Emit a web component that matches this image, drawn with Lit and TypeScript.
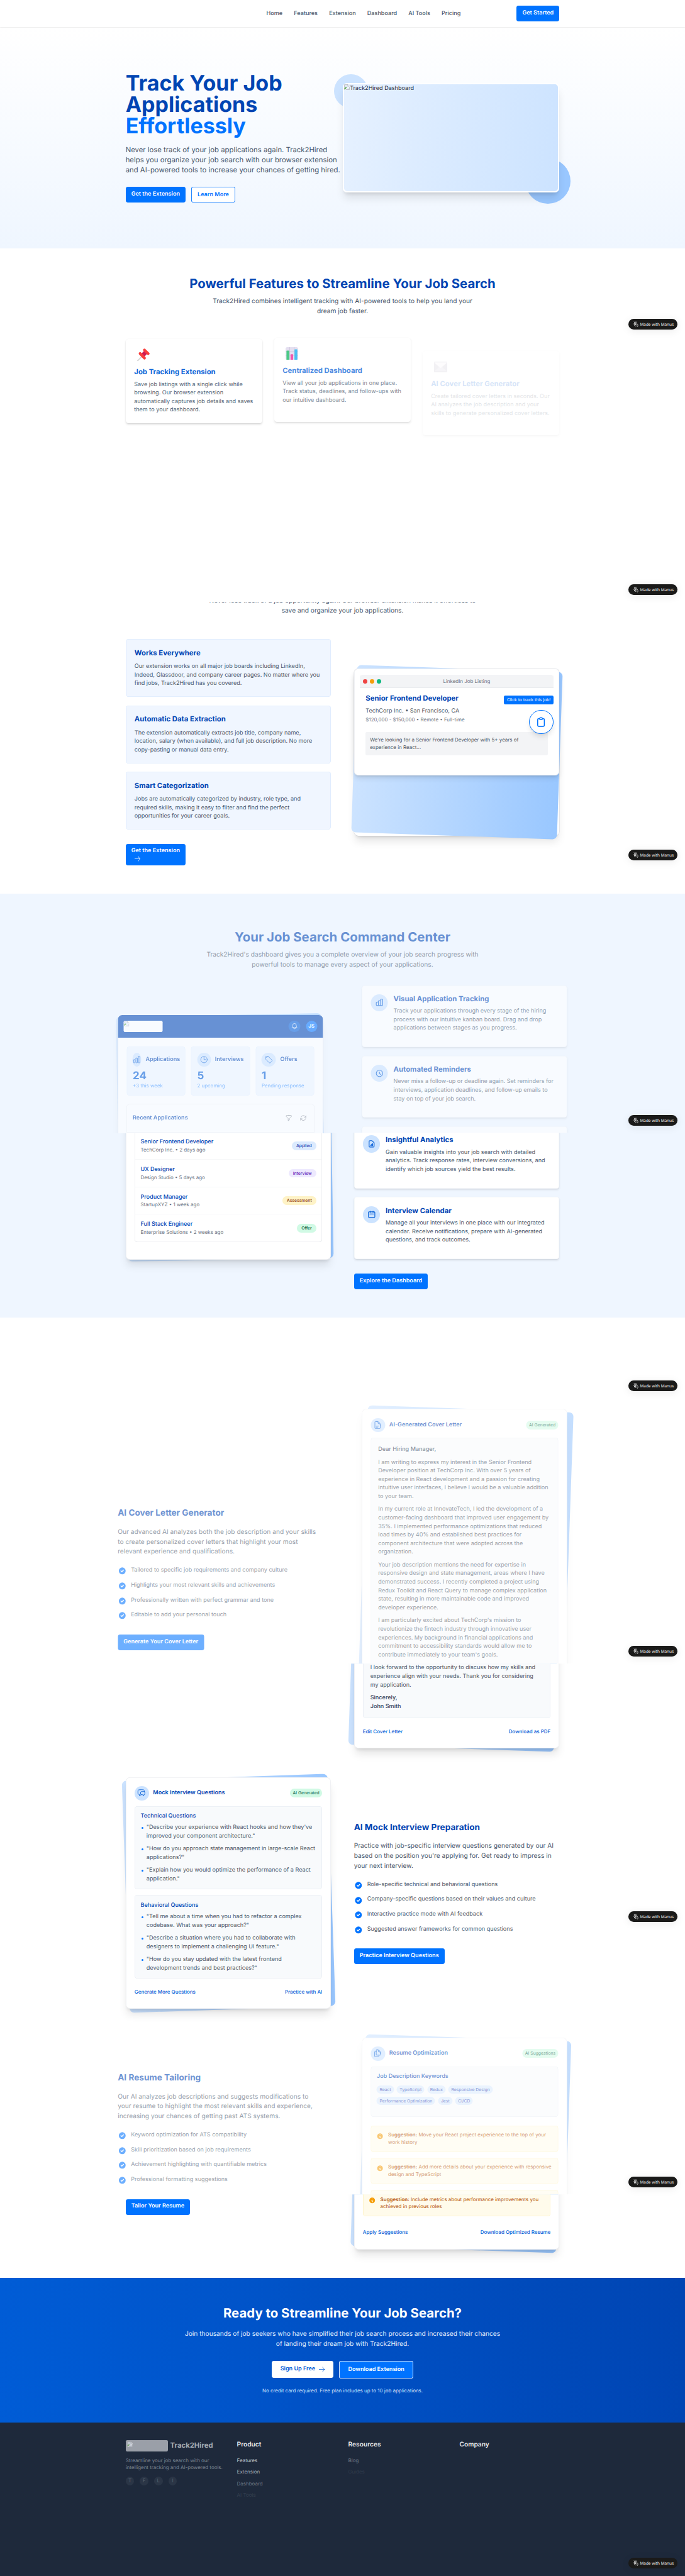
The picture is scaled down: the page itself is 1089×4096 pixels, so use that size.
import { LitElement, html, css } from "lit";
import { customElement } from "lit/decorators.js";
import { classMap } from "lit/directives/class-map.js";

const P = {
  bars: "M3 13.125C3 12.504 3.504 12 4.125 12h2.25c.621 0 1.125.504 1.125 1.125v6.75C7.5 20.496 6.996 21 6.375 21h-2.25A1.125 1.125 0 013 19.875v-6.75zM9.75 8.625c0-.621.504-1.125 1.125-1.125h2.25c.621 0 1.125.504 1.125 1.125v11.25c0 .621-.504 1.125-1.125 1.125h-2.25a1.125 1.125 0 01-1.125-1.125V8.625zM16.5 4.125c0-.621.504-1.125 1.125-1.125h2.25C20.496 3 21 3.504 21 4.125v15.75c0 .621-.504 1.125-1.125 1.125h-2.25a1.125 1.125 0 01-1.125-1.125V4.125z",
  barsJoined: "M9 19v-6a2 2 0 00-2-2H5a2 2 0 00-2 2v6a2 2 0 002 2h2a2 2 0 002-2zm0 0V9a2 2 0 012-2h2a2 2 0 012 2v10m-6 0a2 2 0 002 2h2a2 2 0 002-2m0 0V5a2 2 0 012-2h2a2 2 0 012 2v14a2 2 0 01-2 2h-2a2 2 0 01-2-2z",
  clock: "M12 6v6h4.5m4.5 0a9 9 0 11-18 0 9 9 0 0118 0z",
  clockBold: "M12 8v4l3 3m6-3a9 9 0 11-18 0 9 9 0 0118 0z",
  tag: "M9.568 3H5.25A2.25 2.25 0 003 5.25v4.318c0 .597.237 1.17.659 1.591l9.581 9.581c.699.699 1.78.872 2.607.33a18.095 18.095 0 005.223-5.223c.542-.827.369-1.908-.33-2.607L11.16 3.66A2.25 2.25 0 009.568 3zM6 6h.008v.008H6V6z",
  bell: "M14.857 17.082a23.848 23.848 0 005.454-1.31A8.967 8.967 0 0118 9.75v-.7V9A6 6 0 006 9v.75a8.967 8.967 0 01-2.312 6.022c1.733.64 3.56 1.085 5.455 1.31m5.714 0a24.255 24.255 0 01-5.714 0m5.714 0a3 3 0 11-5.714 0",
  funnel: "M12 3c2.755 0 5.455.232 8.083.678.533.09.917.556.917 1.096v1.044a2.25 2.25 0 01-.659 1.591l-5.432 5.432a2.25 2.25 0 00-.659 1.591v2.927a2.25 2.25 0 01-1.244 2.013L9.75 21v-6.568a2.25 2.25 0 00-.659-1.591L3.659 7.409A2.25 2.25 0 013 5.818V4.774c0-.54.384-1.006.917-1.096A48.32 48.32 0 0112 3z",
  refresh: "M16.023 9.348h4.992v-.001M2.985 19.644v-4.992m0 0h4.992m-4.993 0l3.181 3.183a8.25 8.25 0 0013.803-3.7M4.031 9.865a8.25 8.25 0 0113.803-3.7l3.181 3.182m0-4.991v4.99",
  report: "M9 17v-2m3 2v-4m3 4v-6m2 10H7a2 2 0 01-2-2V5a2 2 0 012-2h5.586a1 1 0 01.707.293l5.414 5.414a1 1 0 01.293.707V19a2 2 0 01-2 2z",
  calendar: "M8 7V3m8 4V3m-9 8h10M5 21h14a2 2 0 002-2V7a2 2 0 00-2-2H5a2 2 0 00-2 2v12a2 2 0 002 2z",
  doc: "M19.5 14.25v-2.625a3.375 3.375 0 00-3.375-3.375h-1.5A1.125 1.125 0 0113.5 7.125v-1.5a3.375 3.375 0 00-3.375-3.375H8.25m0 12.75h7.5m-7.5 3H12M10.5 2.25H5.625c-.621 0-1.125.504-1.125 1.125v17.25c0 .621.504 1.125 1.125 1.125h12.75c.621 0 1.125-.504 1.125-1.125V11.25a9 9 0 00-9-9z",
  chat: "M20.25 8.511c.884.284 1.5 1.128 1.5 2.097v4.286c0 1.136-.847 2.1-1.98 2.193-.34.027-.68.052-1.02.072v3.091l-3-3c-1.354 0-2.694-.055-4.02-.163a2.115 2.115 0 01-.825-.242m9.345-8.334a2.126 2.126 0 00-.476-.095 48.64 48.64 0 00-8.048 0c-1.131.094-1.976 1.057-1.976 2.192v4.286c0 .837.46 1.58 1.155 1.951m9.345-8.334V6.637c0-1.621-1.152-3.026-2.76-3.235A48.455 48.455 0 0011.25 3c-2.115 0-4.198.137-6.24.402-1.608.209-2.76 1.614-2.76 3.235v6.226c0 1.621 1.152 3.026 2.76 3.235.577.075 1.157.14 1.74.194V21l4.155-4.155",
  copy: "M15.75 17.25v3.375c0 .621-.504 1.125-1.125 1.125h-9.75a1.125 1.125 0 01-1.125-1.125V7.875c0-.621.504-1.125 1.125-1.125H6.75a9.06 9.06 0 011.5.124m7.5 10.376h3.375c.621 0 1.125-.504 1.125-1.125V11.25c0-4.46-3.243-8.161-7.5-8.876a9.06 9.06 0 00-1.5-.124H9.375c-.621 0-1.125.504-1.125 1.125v3.5m7.5 10.375H9.375a1.125 1.125 0 01-1.125-1.125v-9.25m12 6.625v-1.875a3.375 3.375 0 00-3.375-3.375h-1.5a1.125 1.125 0 01-1.125-1.125v-1.5a3.375 3.375 0 00-3.375-3.375H9.75",
  clipboard: "M9 5H7a2 2 0 00-2 2v12a2 2 0 002 2h10a2 2 0 002-2V7a2 2 0 00-2-2h-2M9 5a2 2 0 002 2h2a2 2 0 002-2M9 5a2 2 0 012-2h2a2 2 0 012 2",
  check: "M10 18a8 8 0 100-16 8 8 0 000 16zm3.707-9.293a1 1 0 00-1.414-1.414L9 10.586 7.707 9.293a1 1 0 00-1.414 1.414l2 2a1 1 0 001.414 0l4-4z",
  info: "M18 10a8 8 0 11-16 0 8 8 0 0116 0zm-7-4a1 1 0 11-2 0 1 1 0 012 0zM9 9a1 1 0 000 2v3a1 1 0 001 1h1a1 1 0 100-2v-3a1 1 0 00-1-1H9z",
};

const icon = (d: string, size = 24, w = 1.5) =>
  html`<svg class="ic" width=${size} height=${size} viewBox="0 0 24 24" fill="none" stroke="currentColor" stroke-width=${w} stroke-linecap="round" stroke-linejoin="round"><path d=${d}></path></svg>`;
const solid = (d: string, size: number) =>
  html`<svg class="ic" width=${size} height=${size} viewBox="0 0 20 20" fill="currentColor" fill-rule="evenodd"><path d=${d}></path></svg>`;
const arrow = html`<svg class="ic" width="17" height="16" viewBox="0 0 17 16" fill="none" stroke="currentColor" stroke-width="1.3"><path d="M0 8h16M10.5 1c1 3.5 3 6 6 7c-3 1-5 3.500-6 7"></path></svg>`;
const broken = html`<svg class="ic" width="16" height="16" viewBox="0 0 16 16"><path d="M1 1h9.500l4.500 4.500V15H1z" fill="#dfe8f6" stroke="#a5a5a5"></path><path d="M10.500 1v4.500H15" fill="#fff" stroke="#a5a5a5"></path><path d="M1.500 14.500V11L5 7.500l3 2.500-5 4.500z" fill="#58a846"></path><path d="M2 15.500L15.500 6" stroke="#fff" stroke-width="2"></path></svg>`;
const pin = html`<svg class="ic" width="35" height="36" viewBox="0 0 35 36"><path d="M1 35L14 22" stroke="#d3d3d3" stroke-width="3" stroke-linecap="round"></path><path d="M12 15L20 6l9 8-9 10z" fill="#ca0b4a"></path><path d="M8.500 14.500L20.500 27" stroke="#f8312f" stroke-width="8" stroke-linecap="round"></path><path d="M20.500 4.500L31 14.500" stroke="#f8312f" stroke-width="7.500" stroke-linecap="round"></path></svg>`;
const chart = html`<svg class="ic" width="35" height="36" viewBox="0 0 35 36"><rect width="35" height="36" rx="5" fill="#d9d2ea"></rect><path d="M0 12h35M0 24h35M11.500 0v36M24 0v36" stroke="#b9afd0" stroke-width="1.500"></path><path d="M2.500 10.500a1 1 0 011-1h6a1 1 0 011 1V36h-6a2 2 0 01-2-2z" fill="#00b453"></path><rect x="14" y="20" width="7" height="16" rx="1" fill="#ed0f8b"></rect><path d="M25 7a1 1 0 011-1h6a1 1 0 011 1v27a2 2 0 01-2 2h-6z" fill="#00a6ed"></path></svg>`;
const mail = html`<svg class="ic" width="37" height="30" viewBox="0 0 37 30"><rect width="37" height="30" rx="2" fill="#b4acbc"></rect><path d="M1 27L17 13h3l16 14z" fill="#cdc4d6"></path><path d="M1 3L16 16.500q2.500 2 5 0L36 3V2H1z" fill="#f3eef8"></path></svg>`;

const br = (a: string[]) => a.map((l, i) => (i ? html`<br />${l}` : l));

const SKILLS = [["React", "TypeScript", "Redux", "Responsive Design"], ["Performance Optimization", "Jest", "CI/CD"]];

@customElement("app-root")
export class AppRoot extends LitElement {
  static styles = css`
    :host { display: block; }
    * { box-sizing: border-box; }
    .page { zoom: 0.5671875; width: 1920px; height: 7221px; overflow: hidden; position: relative; background: #fff;
      font: 400 16px/24px Inter, "Liberation Sans", sans-serif; color: #475569; white-space: nowrap; text-rendering: geometricPrecision; }
    h1, h2, h3, h4, p, ul { margin: 0; padding: 0; list-style: none; }
    .ic { display: block; flex: none; }
    .wrap { width: 1216px; margin: 0 auto; }
    h2 { font-size: 36px; line-height: 40px; font-weight: 700; color: #0045b3; text-align: center; }
    h3 { font-size: 20px; line-height: 28px; font-weight: 700; color: #0045b3; }
    .sub { font-size: 18px; line-height: 28px; text-align: center; margin-top: 16px; }
    .btn { display: inline-flex; align-items: center; height: 44px; padding: 0 16px 3px; border-radius: 6px; background: #0073ff; color: #fff; font-weight: 600; }
    .btn.line { background: #fff; color: #0073ff; box-shadow: inset 0 0 0 1.5px #0073ff; padding: 0 17.5px 1px; }

    header { height: 76px; background: #fff; box-shadow: 0 1px 2px rgba(0,0,0,.08); position: relative; z-index: 2; }
    .bar { display: flex; justify-content: flex-end; align-items: center; height: 76px; gap: 157px; }
    nav { display: flex; gap: 32px; font-weight: 500; }

    .hero { height: 620px; background: linear-gradient(#fff, #eff6ff); padding-top: 128px; }
    .hero .wrap { display: flex; justify-content: space-between; }
    .copy { width: 608px; }
    h1 { font-size: 60px; line-height: 60px; font-weight: 700; color: #0045b3; }
    h1 span { color: #0073ff; }
    .copy p { font-size: 20px; line-height: 28px; margin: 24px 0 32px; }
    .row { display: flex; gap: 16px; align-items: flex-start; }
    .shot { position: relative; width: 608px; height: 308px; margin-top: 28px; }
    .blob { position: absolute; border-radius: 50%; }
    .blob.a { width: 96px; height: 96px; left: -24px; top: -24px; background: #cce3ff; }
    .blob.b { width: 128px; height: 128px; right: -32px; bottom: -32px; background: #99c7ff; }
    .frame { position: relative; display: flex; height: 308px; border-radius: 12px; border: 4px solid #fff; background: linear-gradient(100deg, #e6f1ff, #cce3ff);
      box-shadow: 0 20px 25px -5px rgba(0,0,0,.1), 0 8px 10px -6px rgba(0,0,0,.1); color: #1e293b; }
    .frame span { margin-left: 1px; }

    .features { height: 992px; padding-top: 80px; }
    .three { display: grid; grid-template-columns: repeat(3, 384px); gap: 32px; margin-top: 62px; }
    .fc { height: 236px; padding: 24px; border-radius: 8px; background: #fff; box-shadow: 0 4px 6px -1px rgba(0,0,0,.1), 0 2px 4px -2px rgba(0,0,0,.1), 0 0 0 1px rgba(0,0,0,.02); }
    .fc h3 { color: #005cd6; margin: 16px 0 8px; }
    .em { height: 40px; display: flex; align-items: center; padding-left: 8px; }
    .f1 { opacity: .93; }
    .f2 { opacity: .7; margin-top: -3px; margin-bottom: 3px; }
    .f3 { opacity: .16; margin-top: 34px; }

    .ext { height: 818px; }
    .cut { height: 40px; overflow: hidden; display: flex; flex-direction: column; justify-content: flex-end; }
    .cut .sub { margin: 0; }
    .two { display: flex; justify-content: space-between; }
    .exts { margin-top: 64px; }
    .col { width: 576px; }
    .stack { display: flex; flex-direction: column; gap: 24px; }
    .ec { height: 162px; padding: 25px; border-radius: 8px; background: #f0f6ff; box-shadow: inset 0 0 0 1px #d3e5fd; }
    .ec p { margin-top: 12px; }
    .wide { flex-direction: column; align-items: flex-start; width: 168px; height: 60px; padding: 8px 16px; margin-top: 40px; }
    .wide .ic { margin: 2px 0 0 9px; }
    .ghost { position: relative; height: 469px; margin-top: 83px; border-radius: 12px; background: #fff; box-shadow: 0 20px 25px -5px rgba(0,0,0,.1), 0 8px 10px -6px rgba(0,0,0,.1), 0 0 0 1px #e5e7eb; }
    .tilt { position: absolute; left: 0; top: 0; width: 576px; border-radius: 12px; background: linear-gradient(90deg, #cce3ff, #99c7ff); }
    .full { height: 469px; }
    .t2 { transform: rotate(2deg); }
    .tn1 { transform: rotate(-1deg); }
    .tn2 { transform: rotate(-2deg); }
    .demo { position: relative; height: 299px; padding: 17px; border-radius: 12px; background: #fff; box-shadow: 0 10px 15px -3px rgba(0,0,0,.12), 0 4px 6px -4px rgba(0,0,0,.1), inset 0 0 0 1px #e5e7eb; }
    .tb { height: 37px; background: #f3f4f6; border-radius: 8px 8px 0 0; box-shadow: inset 0 -1px #dfe2e6; display: flex; align-items: center; padding: 0 8px; gap: 8px; }
    .dot { width: 12px; height: 12px; border-radius: 50%; }
    .red { background: #ef4444; }
    .amb { background: #f59e0b; }
    .grn { background: #10b981; }
    .tb span { flex: 1; text-align: center; font-size: 14px; color: #6b7280; padding-right: 4px; }
    .job { padding: 16px; position: relative; }
    .job .l2 { margin-top: 8px; color: #4b5563; }
    .job .l3 { font-size: 14px; line-height: 20px; color: #6b7280; margin-top: 4px; }
    .job .l4 { font-size: 14px; line-height: 20px; background: #f3f4f6; border-radius: 4px; padding: 12px; margin-top: 24px; color: #4b5563; }
    .tip { position: absolute; right: 0; top: 21px; height: 24px; padding: 0 8px; background: #0073ff; color: #fff; font-size: 12px; line-height: 24px; border-radius: 4px; }
    .fab { position: absolute; right: 0; top: 61px; width: 68px; height: 68px; border-radius: 50%; border: 2px solid #0073ff; background: #fff; color: #0073ff; display: flex; align-items: center; justify-content: center; box-shadow: 0 10px 15px -3px rgba(0,0,0,.12), 0 4px 6px -4px rgba(0,0,0,.1); }

    .dash { height: 1188px; background: #eff6ff; padding-top: 102px; }
    .fade { opacity: .57; }
    .dash .two { margin-top: 42px; align-items: center; height: 852px; }
    .up { position: relative; clip-path: inset(-60px -60px 0 -60px); }
    .dn { position: relative; display: flow-root; clip-path: inset(0 -60px -60px -60px); }
    .dn.stack { display: flex; }
    .l { transform: translateX(-22px); }
    .r { transform: translateX(22px); }
    .card { position: relative; border-radius: 12px; background: #fff; box-shadow: 0 20px 25px -5px rgba(0,0,0,.1), 0 8px 10px -6px rgba(0,0,0,.1), inset 0 0 0 1px #e5e7eb; }
    .mock-up { height: 331px; }
    .mock-up .card { height: 400px; overflow: hidden; }
    .mock-up .tilt, .mock-dn .tilt { height: 686px; }
    .mock-dn { height: 355px; }
    .mock-dn .tilt { top: -331px; }
    .mock-dn .card { height: 415px; margin-top: -60px; padding: 60px 25px 0; }
    .top { height: 64px; background: #0045b3; display: flex; align-items: center; padding: 0 17px; }
    .logo { width: 109px; height: 32px; border-radius: 4px; background: #fff; margin-right: auto; }
    .rnd { width: 32px; height: 32px; border-radius: 50%; display: flex; align-items: center; justify-content: center; color: #fff; font-size: 14px; font-weight: 600; }
    .rnd.n { background: #005cd6; margin-right: 16px; }
    .rnd.j { background: #0073ff; }
    .stats { display: grid; grid-template-columns: 1fr 1fr 1fr; gap: 16px; padding: 25px 25px 24px; }
    .stat { height: 138px; min-width: 0; padding: 17px; border-radius: 8px; background: #f0f6ff; box-shadow: inset 0 0 0 1px #dcebff; }
    .sh { display: flex; align-items: center; gap: 12px; height: 40px; font-weight: 600; color: #0045b3; }
    .oval { width: 40px; height: 40px; border-radius: 50%; background: #cce3ff; color: #005cd6; display: flex; align-items: center; justify-content: center; flex: 0 1 auto; min-width: 24px; }
    .num { font-size: 30px; line-height: 36px; font-weight: 700; color: #005cd6; margin-top: 8px; }
    .nt { font-size: 14px; line-height: 20px; color: #3d94ff; }
    .rec { margin: 0 25px; height: 77px; border-radius: 8px 8px 0 0; box-shadow: 0 0 0 1px #e5e7eb; display: flex; align-items: center; padding: 0 21px 0 17px; font-weight: 600; color: #0045b3; }
    .rec .ic { color: #6b7280; }
    .rec .ic:nth-of-type(1) { margin-left: auto; margin-right: 20px; }
    .rows { box-shadow: inset 1px 0 #e5e7eb, inset -1px 0 #e5e7eb, inset 0 -1px #e5e7eb; border-radius: 0 0 8px 8px; height: 306px; }
    .app { display: flex; justify-content: space-between; align-items: center; height: 77px; padding: 0 17px 1px; box-shadow: inset 0 -1px #eef0f3; }
    .app:first-child { height: 75px; padding-bottom: 3px; }
    .app:last-child { box-shadow: none; }
    .app b { display: block; font-weight: 500; color: #0045b3; }
    .app i { display: block; font-style: normal; font-size: 14px; line-height: 20px; color: #6b7280; }
    .pill { height: 24px; line-height: 24px; border-radius: 12px; padding: 0 12px; font-size: 12px; font-weight: 500; }
    .applied { background: #dbeafe; color: #1e40af; }
    .interview { background: #ede9fe; color: #5b21b6; }
    .assessment { background: #fef3c7; color: #92400e; }
    .offer { background: #d1fae5; color: #065f46; }
    .fu { height: 414px; }
    .fl { height: 354px; }
    .item { flex: none; height: 174px; padding: 25px; display: flex; gap: 16px; border-radius: 8px; background: #fff; box-shadow: 0 4px 6px -1px rgba(0,0,0,.1), 0 2px 4px -2px rgba(0,0,0,.1), inset 0 0 0 1px #eef2f7; }
    .item p { margin-top: 8px; }
    .disc { width: 48px; height: 48px; border-radius: 50%; background: #cce3ff; color: #005cd6; display: flex; align-items: center; justify-content: center; flex: none; }
    .peek { margin-bottom: -156px; }
    .fl .item:first-child { height: 216px; margin-top: -60px; padding-top: 67px; }
    .gap { margin-top: 40px; }

    .ai { height: 2692px; padding-top: 256px; display: flex; flex-direction: column; gap: 80px; }
    .ai .two { align-items: center; flex: none; }
    .ai .two:nth-child(1) { height: 952px; }
    .ai .two:nth-child(2) { height: 650px; }
    .ai .two:nth-child(3) { height: 594px; }
    .blk { height: 400px; }
    .blk h3, .res h3 { font-size: 24px; line-height: 32px; }
    .lead { font-size: 18px; line-height: 28px; margin: 24px 0; }
    .chk { height: 42px; display: flex; gap: 13px; }
    .chk .ic { color: #0073ff; margin-top: 2px; }
    .chks { height: 192px; }
    .lu { height: 714px; }
    .ld { height: 238px; }
    .lu .tilt, .ld .tilt { height: 952px; }
    .ld .tilt { top: -714px; }
    .lu .card { height: 780px; }
    .pad { padding: 25px; }
    .ch { display: flex; align-items: center; height: 40px; margin-bottom: 16px; font-weight: 600; color: #0045b3; gap: 12px; }
    .gen { margin-left: auto; font-size: 12px; font-weight: 400; height: 24px; line-height: 24px; padding: 0 8px; border-radius: 12px; background: #d1fae5; color: #065f46; }
    .box { background: #f8fafc; border-radius: 8px; box-shadow: inset 0 0 0 1px #e2e8f0; }
    .letter { padding: 21px; color: #4b5563; }
    .letter p { margin-bottom: 12px; }
    .letter .dk { color: #374151; font-weight: 500; }
    .lu .letter { height: 760px; }
    .ld .card { height: 298px; margin-top: -60px; padding: 0 25px; }
    .ld .letter { height: 213px; padding-top: 60px; }
    .lnk { display: flex; justify-content: space-between; font-size: 14px; line-height: 44px; font-weight: 500; color: #005cd6; margin-top: 16px; }
    .mi { position: relative; }
    .mi-t { height: 650px; }
    .mi-c { height: 650px; }
    .q { padding: 17px; height: 234px; margin-bottom: 16px; color: #4b5563; }
    .q b, .kw b { display: block; font-weight: 500; color: #0045b3; margin-bottom: 8px; }
    .q li { display: flex; gap: 9px; margin-bottom: 12px; }
    .q li::before { content: ""; width: 5.5px; height: 5.5px; border-radius: 50%; background: #0073ff; margin: 10px 0 0 2px; }
    .ru { height: 440px; }
    .rd { height: 154px; }
    .ru .tilt, .rd .tilt { height: 594px; }
    .rd .tilt { top: -440px; }
    .ru .card { height: 520px; }
    .rd .card { height: 214px; margin-top: -60px; padding: 0 25px; }
    .kw { padding: 17px; height: 142px; margin-bottom: 24px; }
    .kw b { margin-bottom: 12px; }
    .tags { display: flex; gap: 8px; margin-bottom: 8px; }
    .tags span { height: 24px; line-height: 24px; border-radius: 12px; padding: 0 8px; font-size: 12px; background: #dbeafe; color: #1e40af; }
    .sg { height: 74px; padding: 17px 17px 0; margin-bottom: 16px; display: flex; gap: 12px; border-radius: 8px; background: #fffbeb; box-shadow: inset 0 0 0 1px #fef0b8; font-size: 14px; line-height: 20px; color: #b45309; }
    .sg .ic { color: #f59e0b; margin-top: 2px; }
    .sg b { font-weight: 600; }
    .rd .sg { height: 121px; padding-top: 64px; margin-bottom: 24px; }
    .rd .rl { margin-top: 0; }
    .res { height: 343px; }
    .tail { height: 57px; padding-top: 13px; }

    .cta { height: 406px; padding-top: 80px; background: linear-gradient(90deg, #005cd6, #0045b3); }
    .cta h2 { color: #fff; }
    .cta .sub { color: #e6f1ff; margin-top: 24px; }
    .cta .row { justify-content: center; margin-top: 32px; }
    .big { height: 48px; padding: 0 24px; gap: 10px; }
    .cta .w { background: #fff; color: #005cd6; }
    .cta .o { height: 50px; box-shadow: inset 0 0 0 1.5px #fff; padding: 0 25px; }
    .fine { font-size: 14px; line-height: 20px; color: #cce3ff; text-align: center; margin-top: 24px; }

    footer { height: 429px; background: #1e293b; padding-top: 48px; }
    footer .wrap { display: grid; grid-template-columns: repeat(4, 280px); gap: 32px; font-size: 14px; line-height: 20px; }
    .brand { display: flex; align-items: center; gap: 7px; font-size: 20px; font-weight: 700; color: #a5a9b1; }
    .fl-logo { width: 118px; height: 32px; padding: 4px; background: #9a9fa8; border-radius: 4px; }
    .fl-logo .ic { opacity: .55; }
    .blurb { margin-top: 16px; color: #7a8492; }
    .soc { display: flex; gap: 16px; margin-top: 16px; }
    .soc span { width: 24px; height: 24px; border-radius: 50%; background: #2a3546; color: #5b6573; text-align: center; line-height: 24px; }
    h4 { margin: 0 0 20px; font-size: 18px; line-height: 28px; font-weight: 600; color: #ebecee; }
    .fk { line-height: 32px; margin-top: -6px; }
    .c1 { color: #bdc2c9; }
    .c2 { color: #a0a7b1; }
    .c3 { color: #6b7583; }
    .c4 { color: #354050; }
    .c5 { color: #6f7987; }
    .c6 { color: #303b4c; }

    .made { position: absolute; right: 21px; width: 137px; height: 30px; border-radius: 15px; background: #1a1a19; color: #fff; font: 500 11.4px/30px "Open Sans", "Noto Sans", sans-serif; display: flex; align-items: center; gap: 5px; padding-left: 13px; z-index: 5; box-shadow: 0 4px 24px rgba(0,0,0,.08); }
    .m0 { top: 894px; }
    .m1 { top: 1638px; }
    .m2 { top: 2382px; }
    .m3 { top: 3126px; }
    .m4 { top: 3870px; }
    .m5 { top: 4614px; }
    .m6 { top: 5358px; }
    .m7 { top: 6102px; }
    .m8 { top: 7170px; }
  `;

  private made(i: number) {
    return html`<div class=${classMap({ made: true, ["m" + i]: true })}>
      <svg class="ic" width="14" height="16" viewBox="0 0 14 16" fill="none" stroke="#fff" stroke-width="1.2" stroke-linecap="round" stroke-linejoin="round"><path d="M2 1.500l1 1.500M5 .7v1.800M8 1.500L7 3M1.200 6.200c2-2.200 5-3 7.300-1.800l4 5.100v4.300l-2 1.500M2.500 9.500c-1.600-1.300-1-3.200.700-3.600l4 5M2.500 9.500c.5 3 2.500 4.300 5 3.700M5 5l4 4.500M3.500 10.500l3.500-3"></path></svg>
      Made with Manus</div>`;
  }

  private feature(p: string, title: string, tx: string[]) {
    return html`<div class="item"><div class="disc">${icon(p, 24, 2)}</div><div><h3>${title}</h3><p>${br(tx)}</p></div></div>`;
  }

  private stat(p: string, t: string, n: string, s: string) {
    return html`<div class="stat"><div class="sh"><div class="oval">${icon(p, 24, 1.5)}</div><span>${t}</span></div><div class="num">${n}</div><div class="nt">${s}</div></div>`;
  }

  private app(n: string, s: string, tag: string) {
    return html`<div class="app"><div><b>${n}</b><i>${s}</i></div><span class="pill ${tag.toLowerCase()}">${tag}</span></div>`;
  }

  private points(title: string, lead: string[], pts: string[]) {
    return html`<h3>${title}</h3><p class="lead">${br(lead)}</p>
      <div class="chks">${pts.map((t) => html`<div class="chk">${solid(P.check, 24)}<span>${t}</span></div>`)}</div>`;
  }

  private qs(title: string, items: string[][]) {
    return html`<div class="box q"><b>${title}</b><ul>${items.map((t) => html`<li><span>${br(t)}</span></li>`)}</ul></div>`;
  }

  private tip(a: string, b: string) {
    return html`<div class="sg">${solid(P.info, 20)}<div><b>Suggestion:</b> ${a}<br />${b}</div></div>`;
  }

  render() {
    return html`<div class="page">
      <header><div class="wrap bar">
        <nav>${["Home", "Features", "Extension", "Dashboard", "AI Tools", "Pricing"].map((t) => html`<span>${t}</span>`)}</nav>
        <span class="btn">Get Started</span>
      </div></header>

      <section class="hero"><div class="wrap">
        <div class="copy">
          <h1>Track Your Job<br />Applications<br /><span>Effortlessly</span></h1>
          <p>${br(["Never lose track of your job applications again. Track2Hired", "helps you organize your job search with our browser extension", "and AI-powered tools to increase your chances of getting hired."])}</p>
          <div class="row"><span class="btn">Get the Extension</span><span class="btn line">Learn More</span></div>
        </div>
        <div class="shot"><div class="blob a"></div><div class="blob b"></div>
          <div class="frame">${broken}<span>Track2Hired Dashboard</span></div></div>
      </div></section>

      <section class="features"><div class="wrap">
        <h2>Powerful Features to Streamline Your Job Search</h2>
        <p class="sub">${br(["Track2Hired combines intelligent tracking with AI-powered tools to help you land your", "dream job faster."])}</p>
        <div class="three">
          <div class="fc f1"><div class="em">${pin}</div><h3>Job Tracking Extension</h3><p>${br(["Save job listings with a single click while", "browsing. Our browser extension", "automatically captures job details and saves", "them to your dashboard."])}</p></div>
          <div class="fc f2"><div class="em">${chart}</div><h3>Centralized Dashboard</h3><p>${br(["View all your job applications in one place.", "Track status, deadlines, and follow-ups with", "our intuitive dashboard."])}</p></div>
          <div class="fc f3"><div class="em">${mail}</div><h3>AI Cover Letter Generator</h3><p>${br(["Create tailored cover letters in seconds. Our", "AI analyzes the job description and your", "skills to generate personalized cover letters."])}</p></div>
        </div>
      </div></section>

      <section class="ext"><div class="wrap">
        <div class="cut"><p class="sub">${br(["Never lose track of a job opportunity again. Our browser extension makes it effortless to", "save and organize your job applications."])}</p></div>
        <div class="two exts">
          <div class="col">
            <div class="stack">
              <div class="ec"><h3>Works Everywhere</h3><p>${br(["Our extension works on all major job boards including LinkedIn,", "Indeed, Glassdoor, and company career pages. No matter where you", "find jobs, Track2Hired has you covered."])}</p></div>
              <div class="ec"><h3>Automatic Data Extraction</h3><p>${br(["The extension automatically extracts job title, company name,", "location, salary (when available), and full job description. No more", "copy-pasting or manual data entry."])}</p></div>
              <div class="ec"><h3>Smart Categorization</h3><p>${br(["Jobs are automatically categorized by industry, role type, and", "required skills, making it easy to filter and find the perfect", "opportunities for your career goals."])}</p></div>
            </div>
            <div class="btn wide"><span>Get the Extension</span>${arrow}</div>
          </div>
          <div class="col"><div class="ghost"><div class="tilt t2 full"></div>
            <div class="demo">
              <div class="tb"><i class="dot red"></i><i class="dot amb"></i><i class="dot grn"></i><span>LinkedIn Job Listing</span></div>
              <div class="job">
                <h3>Senior Frontend Developer</h3>
                <div class="l2">TechCorp Inc. • San Francisco, CA</div>
                <div class="l3">$120,000 - $150,000 • Remote • Full-time</div>
                <div class="l4">We're looking for a Senior Frontend Developer with 5+ years of<br />experience in React...</div>
                <div class="tip">Click to track this job!</div>
                <div class="fab">${icon(P.clipboard, 32, 2)}</div>
              </div>
            </div></div></div>
        </div>
      </div></section>

      <section class="dash"><div class="wrap">
        <div class="fade"><h2>Your Job Search Command Center</h2>
          <p class="sub">${br(["Track2Hired's dashboard gives you a complete overview of your job search progress with", "powerful tools to manage every aspect of your applications."])}</p></div>
        <div class="two">
          <div class="col">
            <div class="up mock-up l fade"><div class="tilt tn1"></div>
              <div class="card">
                <div class="top"><div class="logo">${broken}</div><div class="rnd n">${icon(P.bell, 20, 1.5)}</div><div class="rnd j">JS</div></div>
                <div class="stats">
                  ${this.stat(P.bars, "Applications", "24", "+3 this week")}
                  ${this.stat(P.clock, "Interviews", "5", "2 upcoming")}
                  ${this.stat(P.tag, "Offers", "1", "Pending response")}
                </div>
                <div class="rec">Recent Applications ${icon(P.funnel, 20, 1.5)}${icon(P.refresh, 20, 1.5)}</div>
              </div></div>
            <div class="dn mock-dn"><div class="tilt tn1"></div>
              <div class="card"><div class="rows">
                ${this.app("Senior Frontend Developer", "TechCorp Inc. • 2 days ago", "Applied")}
                ${this.app("UX Designer", "Design Studio • 5 days ago", "Interview")}
                ${this.app("Product Manager", "StartupXYZ • 1 week ago", "Assessment")}
                ${this.app("Full Stack Engineer", "Enterprise Solutions • 2 weeks ago", "Offer")}
              </div></div></div>
          </div>
          <div class="col">
            <div class="up fu stack r fade">
              ${this.feature(P.barsJoined, "Visual Application Tracking", ["Track your applications through every stage of the hiring", "process with our intuitive kanban board. Drag and drop", "applications between stages as you progress."])}
              ${this.feature(P.clockBold, "Automated Reminders", ["Never miss a follow-up or deadline again. Set reminders for", "interviews, application deadlines, and follow-up emails to", "stay on top of your job search."])}
              <div class="item peek"></div>
            </div>
            <div class="dn fl stack">
              ${this.feature(P.report, "Insightful Analytics", ["Gain valuable insights into your job search with detailed", "analytics. Track response rates, interview conversions, and", "identify which job sources yield the best results."])}
              ${this.feature(P.calendar, "Interview Calendar", ["Manage all your interviews in one place with our integrated", "calendar. Receive notifications, prepare with AI-generated", "questions, and track outcomes."])}
            </div>
            <div class="btn gap">Explore the Dashboard</div>
          </div>
        </div>
      </div></section>

      <section class="ai wrap">
        <div class="two">
          <div class="col blk l fade">
            ${this.points("AI Cover Letter Generator", ["Our advanced AI analyzes both the job description and your skills", "to create personalized cover letters that highlight your most", "relevant experience and qualifications."], ["Tailored to specific job requirements and company culture", "Highlights your most relevant skills and achievements", "Professionally written with perfect grammar and tone", "Editable to add your personal touch"])}
            <span class="btn">Generate Your Cover Letter</span>
          </div>
          <div class="col">
            <div class="up lu r fade"><div class="tilt t2"></div>
              <div class="card pad">
                <div class="ch"><div class="oval">${icon(P.doc)}</div>AI-Generated Cover Letter<span class="gen">AI Generated</span></div>
                <div class="box letter">
                  <p class="dk">Dear Hiring Manager,</p>
                  <p>${br(["I am writing to express my interest in the Senior Frontend", "Developer position at TechCorp Inc. With over 5 years of", "experience in React development and a passion for creating", "intuitive user interfaces, I believe I would be a valuable addition", "to your team."])}</p>
                  <p>${br(["In my current role at InnovateTech, I led the development of a", "customer-facing dashboard that improved user engagement by", "35%. I implemented performance optimizations that reduced", "load times by 40% and established best practices for", "component architecture that were adopted across the", "organization."])}</p>
                  <p>${br(["Your job description mentions the need for expertise in", "responsive design and state management, areas where I have", "demonstrated success. I recently completed a project using", "Redux Toolkit and React Query to manage complex application", "state, resulting in more maintainable code and improved", "developer experience."])}</p>
                  <p>${br(["I am particularly excited about TechCorp's mission to", "revolutionize the fintech industry through innovative user", "experiences. My background in financial applications and", "commitment to accessibility standards would allow me to", "contribute immediately to your team's goals."])}</p>
                </div>
              </div></div>
            <div class="dn ld"><div class="tilt t2"></div>
              <div class="card"><div class="box letter">
                <p>${br(["I look forward to the opportunity to discuss how my skills and", "experience align with your needs. Thank you for considering", "my application."])}</p>
                <p class="dk">Sincerely,<br />John Smith</p></div>
                <div class="lnk"><span>Edit Cover Letter</span><span>Download as PDF</span></div>
              </div></div>
          </div>
        </div>

        <div class="two">
          <div class="col mi"><div class="tilt tn2 mi-t"></div>
            <div class="card pad mi-c">
              <div class="ch"><div class="oval">${icon(P.chat)}</div>Mock Interview Questions<span class="gen">AI Generated</span></div>
              ${this.qs("Technical Questions", [['"Describe your experience with React hooks and how they\'ve', 'improved your component architecture."'], ['"How do you approach state management in large-scale React', 'applications?"'], ['"Explain how you would optimize the performance of a React', 'application."']])}
              ${this.qs("Behavioral Questions", [['"Tell me about a time when you had to refactor a complex', 'codebase. What was your approach?"'], ['"Describe a situation where you had to collaborate with', 'designers to implement a challenging UI feature."'], ['"How do you stay updated with the latest frontend', 'development trends and best practices?"']])}
              <div class="lnk"><span>Generate More Questions</span><span>Practice with AI</span></div>
            </div></div>
          <div class="col blk">
            ${this.points("AI Mock Interview Preparation", ["Practice with job-specific interview questions generated by our AI", "based on the position you're applying for. Get ready to impress in", "your next interview."], ["Role-specific technical and behavioral questions", "Company-specific questions based on their values and culture", "Interactive practice mode with AI feedback", "Suggested answer frameworks for common questions"])}
            <span class="btn">Practice Interview Questions</span>
          </div>
        </div>

        <div class="two">
          <div class="col">
            <div class="res l fade">${this.points("AI Resume Tailoring", ["Our AI analyzes job descriptions and suggests modifications to", "your resume to highlight the most relevant skills and experience,", "increasing your chances of getting past ATS systems."], ["Keyword optimization for ATS compatibility", "Skill prioritization based on job requirements", "Achievement highlighting with quantifiable metrics", "Professional formatting suggestions"])}</div>
            <div class="tail"><span class="btn">Tailor Your Resume</span></div>
          </div>
          <div class="col">
            <div class="up ru r fade"><div class="tilt t2"></div>
              <div class="card pad">
                <div class="ch"><div class="oval">${icon(P.copy)}</div>Resume Optimization<span class="gen">AI Suggestions</span></div>
                <div class="box kw"><b>Job Description Keywords</b>${SKILLS.map((r) => html`<div class="tags">${r.map((s) => html`<span>${s}</span>`)}</div>`)}</div>
                ${this.tip("Move your React project experience to the top of your", "work history")}
                ${this.tip("Add more details about your experience with responsive", "design and TypeScript")}
                <div class="sg"></div>
              </div></div>
            <div class="dn rd"><div class="tilt t2"></div>
              <div class="card">
                ${this.tip("Include metrics about performance improvements you", "achieved in previous roles")}
                <div class="lnk rl"><span>Apply Suggestions</span><span>Download Optimized Resume</span></div>
              </div></div>
          </div>
        </div>
      </section>

      <section class="cta"><div class="wrap">
        <h2>Ready to Streamline Your Job Search?</h2>
        <p class="sub">${br(["Join thousands of job seekers who have simplified their job search process and increased their chances", "of landing their dream job with Track2Hired."])}</p>
        <div class="row"><span class="btn big w">Sign Up Free ${arrow}</span><span class="btn big o">Download Extension</span></div>
        <p class="fine">No credit card required. Free plan includes up to 10 job applications.</p>
      </div></section>

      <footer><div class="wrap">
        <div><div class="brand"><div class="fl-logo">${broken}</div>Track2Hired</div>
          <p class="blurb">Streamline your job search with our<br />intelligent tracking and AI-powered tools.</p>
          <div class="soc">${["T", "F", "L", "I"].map((t) => html`<span>${t}</span>`)}</div></div>
        <div><h4>Product</h4><div class="fk"><div class="c1">Features</div><div class="c2">Extension</div><div class="c3">Dashboard</div><div class="c4">AI Tools</div></div></div>
        <div><h4>Resources</h4><div class="fk"><div class="c5">Blog</div><div class="c6">Guides</div></div></div>
        <div><h4>Company</h4></div>
      </div></footer>
      ${[0, 1, 2, 3, 4, 5, 6, 7, 8].map((i) => this.made(i))}
    </div>`;
  }
}
